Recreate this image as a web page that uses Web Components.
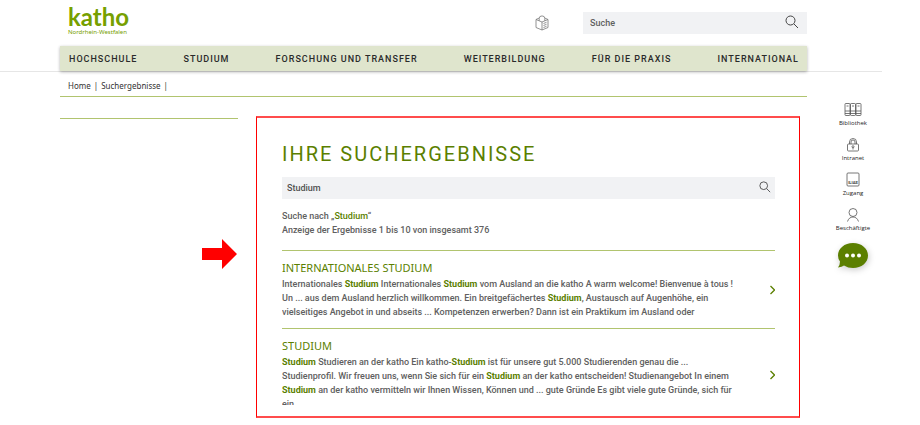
<!DOCTYPE html>
<html lang="de">
<head>
<meta charset="utf-8">
<title>Suchergebnisse – katho</title>
<style>
body { margin: 0; background: #fff; color: #606060; font: 500 9px/14px Roboto, "Noto Sans", sans-serif; --green: #5b7f00; --line: #b1c46f; }
</style>
</head>
<body>
<katho-page>
  <katho-header slot="header">
    <katho-logo slot="logo"></katho-logo>
    <katho-search slot="search" label="Suche" hint="Suche"></katho-search>
    <katho-nav slot="nav">
      <a href="#">HOCHSCHULE</a><a href="#">STUDIUM</a><a href="#">FORSCHUNG UND TRANSFER</a><a href="#">WEITERBILDUNG</a><a href="#">FÜR DIE PRAXIS</a><a href="#">INTERNATIONAL</a>
    </katho-nav>
  </katho-header>
  <katho-crumbs slot="crumbs"></katho-crumbs>
  <katho-results slot="main">
    <katho-search slot="search" class="compact" label="Suchbegriff" value="Studium"></katho-search>
    <katho-result heading="INTERNATIONALES STUDIUM">Internationales <b>Studium</b> Internationales <b>Studium</b> vom Ausland an die katho A warm welcome! Bienvenue à tous !<br>Un ... aus dem Ausland herzlich willkommen. Ein breitgefächertes <b>Studium</b>, Austausch auf Augenhöhe, ein<br>vielseitiges Angebot in und abseits ... Kompetenzen erwerben? Dann ist ein Praktikum im Ausland oder</katho-result>
    <katho-result heading="STUDIUM"><b>Studium</b> Studieren an der katho Ein katho-<b>Studium</b> ist für unsere gut 5.000 Studierenden genau die ...<br>Studienprofil. Wir freuen uns, wenn Sie sich für ein <b>Studium</b> an der katho entscheiden! Studienangebot In einem<br><b>Studium</b> an der katho vermitteln wir Ihnen Wissen, Können und ... gute Gründe Es gibt viele gute Gründe, sich für<br>ein</katho-result>
  </katho-results>
  <katho-tools slot="tools"></katho-tools>
</katho-page>
<script>
function define(name, html) {
  const t = document.createElement('template');
  customElements.define(name, class extends HTMLElement {
    constructor() {
      super();
      t.innerHTML = html(this);
      this.attachShadow({ mode: 'open' }).append(t.content.cloneNode(true));
    }
  });
}

define('katho-page', () => `<style>
  :host { display: block; }
  .body { display: grid; grid-template-columns: 178px minmax(0, 1fr); column-gap: 18px; padding: 19px 120px 8px 60px; }
  .side { border-top: 1px solid var(--line); margin-top: 2px; position: relative; }
  .arrow { position: absolute; right: 1px; top: 120px; width: 35px; height: 30px; fill: #f00; }
  .crumbs { padding: 0 113px 0 60px; }
  .tools { position: absolute; right: 38px; top: 102px; width: 58px; }
</style>
<slot name="header"></slot>
<div class="crumbs"><slot name="crumbs"></slot></div>
<div class="body">
  <aside class="side"><svg class="arrow" viewBox="0 0 35 30"><path d="M0 9H20V0L35 15L20 30V21H0Z"/></svg></aside>
  <slot name="main"></slot>
</div>
<aside class="tools"><slot name="tools"></slot></aside>`);

define('katho-header', () => `<style>
  :host { display: block; margin-right: 38px; padding: 0 75px 0 60px; border-bottom: 1px solid #e6e6e6; }
  .top { display: flex; align-items: center; height: 46px; }
  .book { margin-left: auto; margin-right: 34px; width: 14px; height: 16px; padding: 0; border: 0; background: none; }
  .book svg { display: block; fill: none; stroke: #777; stroke-width: .8; }
  slot[name=search] { display: block; width: 224px; }
</style>
<div class="top">
  <slot name="logo"></slot>
  <button class="book" aria-label="Leichte Sprache"><svg width="14" height="16" viewBox="0 0 14 16"><path d="M4.200 3L1 4.500V12.500L7 15L13 12.500V4.500L9.800 3M1 4.500L7 7L13 4.500M7 7V15M8.500 8.500L11.500 7.300M8.500 10.500L11.500 9.300M8.500 12.500L11.500 11.300"/><path d="M4.200 5.800V3.500A2.800 2.600 0 0 1 9.800 3.500V5.800"/></svg></button>
  <slot name="search"></slot>
</div>
<slot name="nav"></slot>`);

define('katho-logo', () => `<style>
  :host { display: block; padding: 0 0 4px 8px; }
  a { display: block; color: #76a000; text-decoration: none; }
  b { display: block; font: 700 24px/22px Lato, sans-serif; }
  small { display: block; font: 400 6px/8px "Noto Sans", sans-serif; }
</style><a href="#"><b>katho</b><small>Nordrhein-Westfalen</small></a>`);

define('katho-search', el => `<style>
  :host { display: block; }
  form { display: flex; align-items: center; height: 22px; background: #f1f2f4; padding: 0 8px 0 7px; }
  :host(.compact) form { padding: 0 4px 0 5px; }
  input { flex: 1; min-width: 0; border: 0; padding: 0; background: none; font: inherit; color: #505050; outline: 0; }
  input::placeholder { color: #606060; opacity: 1; }
  button { border: 0; padding: 0 0 2px; background: none; }
  svg { display: block; width: 14px; height: 14px; fill: none; stroke: #444; stroke-width: 1; }
  :host(.compact) svg { width: 12px; height: 12px; }
</style><form><input type="text" aria-label="${el.getAttribute('label')}" placeholder="${el.getAttribute('hint') || ''}" value="${el.getAttribute('value') || ''}">
<button type="button" aria-label="Suchen"><svg viewBox="0 0 14 14"><circle cx="5.500" cy="5.500" r="4.500"/><path d="M9 9L13 13"/></svg></button></form>`);

define('katho-nav', () => `<style>
  :host { display: flex; justify-content: space-between; align-items: center; height: 25px; padding: 0 8px 0 9px; background: #dfe5cd; box-shadow: 0 1px 3px rgba(0,0,0,.3); }
  ::slotted(a) { color: #2a2a2a; text-decoration: none; letter-spacing: 1px; white-space: nowrap; }
</style><slot></slot>`);

define('katho-crumbs', () => `<style>
  :host { display: block; border-bottom: 1px solid var(--line); padding: 7px 8px 3px; font: 400 8px/14px "Noto Sans", sans-serif; color: #333; }
  nav { display: flex; gap: 3px; }
  a { color: inherit; text-decoration: none; }
</style><nav aria-label="Brotkrumen"><a href="#">Home</a><span>|</span><a href="#">Suchergebnisse</a><span>|</span></nav>`);

define('katho-results', () => `<style>
  :host { display: block; border: solid #f00; border-width: 2px 1px; border-color: #ff4c4c #f00; padding: 23px 24px 11px 25px; }
  h1 { margin: 0 0 10px; font: 400 20px/26px Roboto, sans-serif; letter-spacing: 2px; color: var(--green); }
  p { margin: 10px 0 13px; }
  b { color: var(--green); font-weight: 500; }
  .list { max-height: 155px; overflow: hidden; }
</style><h1>IHRE SUCHERGEBNISSE</h1><slot name="search"></slot>
<p>Suche nach „<b>Studium</b>“<br>Anzeige der Ergebnisse 1 bis 10 von insgesamt 376</p><div class="list"><slot></slot></div>`);

define('katho-result', el => `<style>
  :host { display: block; border-top: 1px solid var(--line); padding: 9px 0; }
  a { display: flex; color: inherit; text-decoration: none; }
  .text { flex: 1; min-width: 0; }
  h2 { margin: 0 0 1px; font: 400 11px/16px "Noto Sans", sans-serif; color: var(--green); }
  p { margin: 0; white-space: nowrap; }
  ::slotted(b) { color: var(--green); font-weight: 700; }
  svg { align-self: center; width: 6px; height: 10px; fill: none; stroke: var(--green); stroke-width: 1.300; overflow: visible; }
</style><a href="#"><div class="text"><h2>${el.getAttribute('heading')}</h2><p><slot></slot></p></div>
<svg viewBox="0 0 6 10"><path d="M1.500 1L5.500 5L1.500 9"/></svg></a>`);

define('katho-tools', () => `<style>
  :host { display: flex; flex-direction: column; align-items: center; }
  a { display: flex; flex-direction: column; align-items: center; height: 35px; color: #222; text-decoration: none; font: 400 6px/10px "Open Sans", sans-serif; }
  a svg { width: 18px; height: 15px; fill: none; stroke: #555; stroke-width: .8; margin-bottom: 1px; }
  button { border: 0; padding: 1px 0 0; background: none; }
  button svg { display: block; width: 30px; height: 25px; filter: drop-shadow(1px 2px 3px rgba(0,0,0,.2)); }
</style>
<a href="#"><svg viewBox="0 0 18 15"><rect x="1" y="1.500" width="5" height="12" rx=".8"/><rect x="6.500" y="1.500" width="5" height="12" rx=".8"/><rect x="12" y="1.500" width="5" height="12" rx=".8"/><path d="M1 9H17M1 11.500H17M2.500 4H4.500M8 4H10M13.500 4H15.500"/></svg>Bibliothek</a>
<a href="#"><svg viewBox="0 0 18 15"><rect x="3.500" y="7" width="11" height="7" rx="1"/><path d="M5.500 7V5A3.500 3.500 0 0 1 12.500 5V7M7 7V5A2 2 0 0 1 11 5V7M9 10.500V12.500"/><circle cx="9" cy="9.700" r="1"/></svg>Intranet</a>
<a href="#"><svg viewBox="0 0 18 15"><rect x="3" y="1" width="12" height="13" rx="1"/><text x="9" y="12" text-anchor="middle" font-family="Roboto" font-size="4" font-weight="700" fill="#333" stroke="none">ILIAS</text></svg>Zugang</a>
<a href="#"><svg viewBox="0 0 18 15"><circle cx="9" cy="5.500" r="4"/><path d="M3.500 14.500Q5 10 9 10T14.500 14.500"/></svg>Beschäftigte</a>
<button aria-label="Chat"><svg viewBox="0 0 30 25"><path d="M15 0C23.500 0 30 5.500 30 12.500S23.500 25 15 25Q10 25 6 22.500Q4 24 0 24.500Q2 22 2 18.500Q0 16 0 12.500C0 5.500 6.500 0 15 0Z" fill="#5b7f00"/><circle cx="9" cy="12.500" r="2" fill="#fff"/><circle cx="15" cy="12.500" r="2" fill="#fff"/><circle cx="21" cy="12.500" r="2" fill="#fff"/></svg></button>`);
</script>
</body>
</html>
